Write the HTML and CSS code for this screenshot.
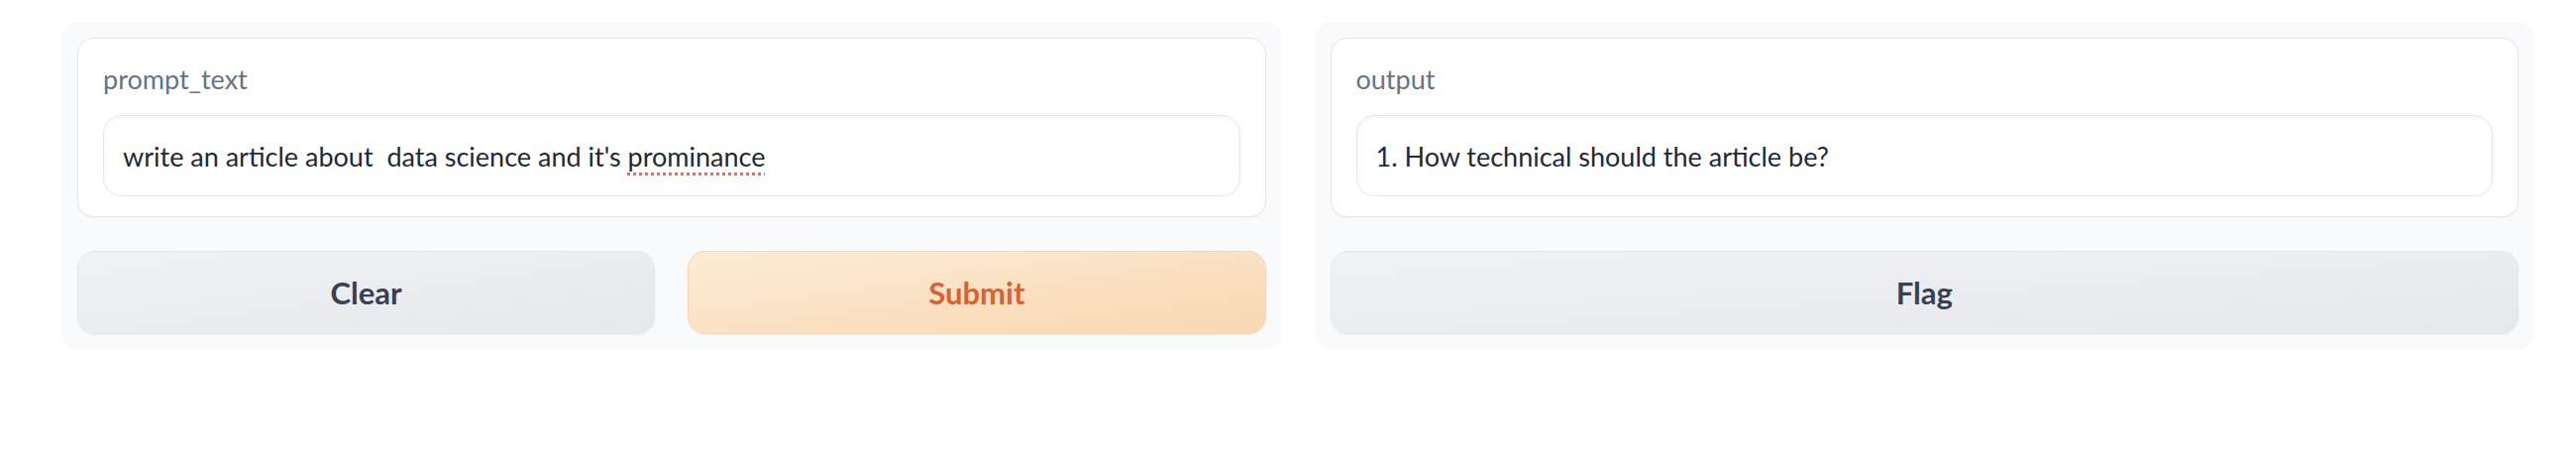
FILE: index.html
```html
<!DOCTYPE html>
<html lang="en">
<head>
<meta charset="utf-8">
<title>Interface</title>
<link rel="stylesheet" href="styles.css">
</head>
<body>
<div class="app">
  <div class="panel">
    <div class="card">
      <div class="label">prompt_text</div>
      <div class="field">write an article about &nbsp;data science and it's <span class="misspelt">prominance</span></div>
    </div>
    <div class="actions">
      <button class="btn btn-secondary">Clear</button>
      <button class="btn btn-primary">Submit</button>
    </div>
  </div>
  <div class="panel">
    <div class="card">
      <div class="label">output</div>
      <div class="field">1. How technical should the article be?</div>
    </div>
    <div class="actions">
      <button class="btn btn-secondary">Flag</button>
    </div>
  </div>
</div>
</body>
</html>
```

FILE: styles.css
```css
html, body {
  margin: 0;
  padding: 0;
  background: #ffffff;
}

body {
  font-family: "Lato", "Noto Sans", "Liberation Sans", sans-serif;
}

.app {
  display: flex;
  gap: 33px;
  padding: 22px 42px 0 62px;
}

.panel {
  flex: 1 1 0;
  min-width: 0;
  background: #f9fafb;
  border-radius: 16px;
  padding: 16px 16px 15px;
  display: flex;
  flex-direction: column;
  gap: 34px;
}

.card {
  background: #ffffff;
  border: 1px solid #e5e7eb;
  border-radius: 16px;
  padding: 23px 25px 20px;
  box-shadow: 0 1px 2px rgba(0, 0, 0, 0.04);
}

.label {
  font-size: 27px;
  line-height: 36px;
  color: #6b7280;
  margin-bottom: 18px;
}

.field {
  height: 80px;
  display: flex;
  align-items: center;
  padding: 0 19px;
  border: 1px solid #e5e7eb;
  border-radius: 18px;
  background: #ffffff;
  box-shadow: inset 0 2px 4px rgba(0, 0, 0, 0.04);
  font-size: 27px;
  color: #1f2937;
  white-space: pre;
}

.misspelt {
  text-decoration: underline dotted #ef6a5a;
  text-decoration-thickness: 3px;
  text-underline-offset: 6px;
}

.actions {
  display: flex;
  gap: 33px;
}

.btn {
  flex: 1 1 0;
  height: 84px;
  border-radius: 18px;
  font-family: inherit;
  font-size: 31px;
  font-weight: 700;
  cursor: pointer;
  box-shadow: 0 1px 2px rgba(0, 0, 0, 0.05);
}

.btn-secondary {
  border: 1px solid #e5e7eb;
  background: linear-gradient(to bottom right, #f1f2f4, #e5e7eb);
  color: #374151;
}

.btn-primary {
  border: 1px solid #fad5ad;
  background: linear-gradient(to bottom right, #fdebd6, #f8d8b1);
  color: #dc6130;
}
```
